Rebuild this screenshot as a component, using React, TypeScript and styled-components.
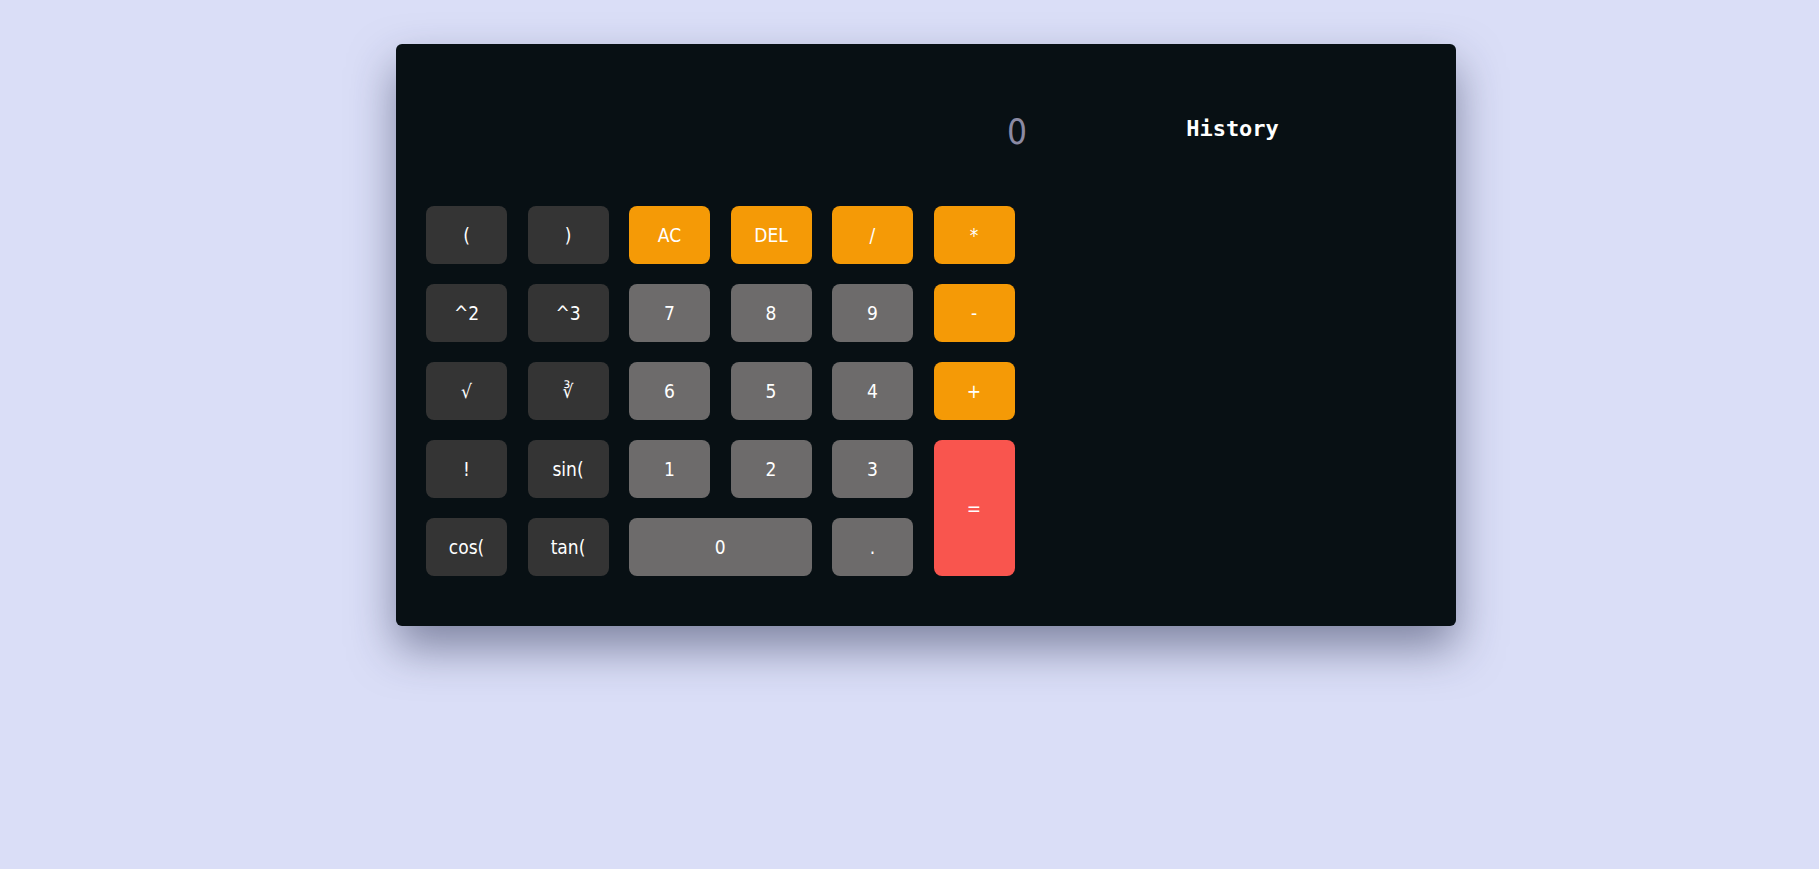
import React from "react";
import styled, { createGlobalStyle } from "styled-components";

const Global = createGlobalStyle`
  html, body { margin: 0; padding: 0; }
  body {
    background: #dadef7;
    min-height: 869px;
    font-family: "DejaVu Sans Condensed", "DejaVu Sans", sans-serif;
  }
`;

const Page = styled.div`
  display: flex;
  padding: 44px 0 0 396px;
`;

const Card = styled.div`
  width: 1060px;
  box-sizing: border-box;
  background: #081014;
  border-radius: 6px;
  box-shadow: 0 22px 45px rgba(40, 45, 80, 0.5);
  display: flex;
  padding: 30px 30px 50px 30px;
`;

const Calculator = styled.div`
  width: 600px;
  display: flex;
  flex-direction: column;
`;

const Display = styled.div`
  height: 132px;
  box-sizing: border-box;
  padding: 38px 0 0 0;
  margin-right: -1px;
  text-align: right;
  font-family: "DejaVu Sans Condensed", "DejaVu Sans", sans-serif;
  font-size: 35px;
  line-height: 40px;
  color: #8b8aa3;
`;

const Keypad = styled.div`
  display: grid;
  grid-template-columns: repeat(6, 81px);
  grid-auto-rows: 58px;
  column-gap: 20.5px;
  row-gap: 20px;
`;

type Variant = "dark" | "num" | "op" | "eq";

const colors: Record<Variant, string> = {
  dark: "#343434",
  num: "#6d6b6b",
  op: "#f59a06",
  eq: "#f9554e",
};

const Key = styled.button<{ $v: Variant; $wide?: boolean; $tall?: boolean }>`
  border: none;
  border-radius: 8px;
  background: ${(p) => colors[p.$v]};
  color: #ffffff;
  font-family: "DejaVu Sans Condensed", "DejaVu Sans", sans-serif;
  font-size: 19px;
  display: flex;
  align-items: center;
  justify-content: center;
  padding: 0;
  cursor: pointer;
  grid-column: ${(p) => (p.$wide ? "span 2" : "auto")};
  grid-row: ${(p) => (p.$tall ? "span 2" : "auto")};
`;

const History = styled.div`
  flex: 1;
  margin-left: 13px;
  padding-top: 42px;
  text-align: center;
`;

const HistoryTitle = styled.div`
  font-family: "DejaVu Sans Mono", monospace;
  font-weight: bold;
  font-size: 22px;
  line-height: 26px;
  color: #ffffff;
`;

type K = { label: string; v: Variant; wide?: boolean; tall?: boolean };

const keys: K[] = [
  { label: "(", v: "dark" },
  { label: ")", v: "dark" },
  { label: "AC", v: "op" },
  { label: "DEL", v: "op" },
  { label: "/", v: "op" },
  { label: "*", v: "op" },
  { label: "^2", v: "dark" },
  { label: "^3", v: "dark" },
  { label: "7", v: "num" },
  { label: "8", v: "num" },
  { label: "9", v: "num" },
  { label: "-", v: "op" },
  { label: "√", v: "dark" },
  { label: "∛", v: "dark" },
  { label: "6", v: "num" },
  { label: "5", v: "num" },
  { label: "4", v: "num" },
  { label: "+", v: "op" },
  { label: "!", v: "dark" },
  { label: "sin(", v: "dark" },
  { label: "1", v: "num" },
  { label: "2", v: "num" },
  { label: "3", v: "num" },
  { label: "=", v: "eq", tall: true },
  { label: "cos(", v: "dark" },
  { label: "tan(", v: "dark" },
  { label: "0", v: "num", wide: true },
  { label: ".", v: "num" },
];

export default function App() {
  return (
    <>
      <Global />
      <Page>
        <Card>
          <Calculator>
            <Display>0</Display>
            <Keypad>
              {keys.map((k, i) => (
                <Key key={i} $v={k.v} $wide={k.wide} $tall={k.tall}>
                  {k.label}
                </Key>
              ))}
            </Keypad>
          </Calculator>
          <History>
            <HistoryTitle>History</HistoryTitle>
          </History>
        </Card>
      </Page>
    </>
  );
}
